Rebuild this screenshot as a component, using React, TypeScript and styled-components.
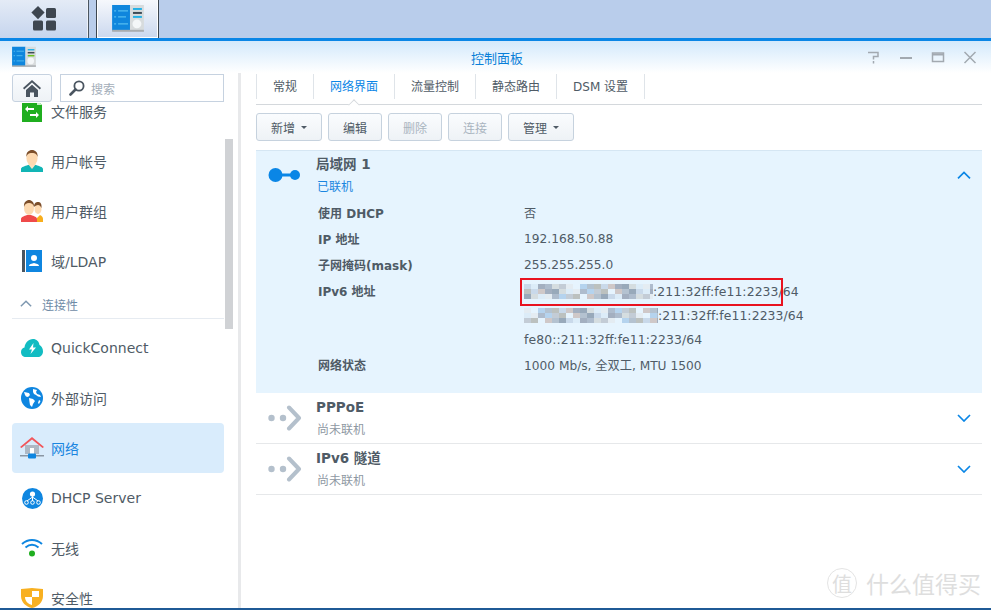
import { createGlobalStyle, styled } from 'styled-components';

const GlobalStyle = createGlobalStyle`
  html, body {
    margin: 0;
    width: 991px;
    height: 610px;
    overflow: hidden;
    background: #fff;
    font-family: "DejaVu Sans", "Noto Sans CJK SC", sans-serif;
    font-size: 12px;
    color: #4f5b66;
  }
`;

const MOSAIC_COLORS = ['#b4c2d0', '#c9d9ea', '#a3afc0', '#d5dde0', '#e4ecf2', '#b5d3ee', '#bcc1bf', '#cfc8c8', '#98a9ba', '#dcecf8', '#aebccd', '#c3ccd6', '#e6f4fe'];

const ControlPanelIcon = ({ size, small }: { size: number; small?: boolean }) => (
  <svg width={size} height={size * 0.9} viewBox="0 0 32 29">
    <rect x="0" y="1" width="18" height="26" fill="#0f86dd" />
    <rect x="18" y="1" width="14" height="26" fill="#d7dbdd" />
    <rect x="0" y="26" width="32" height="2" fill="#a9adb0" />
    <g stroke="#55bdf0" strokeWidth="1.2">
      <path d="M6 7h10M6 13h8M6 20h10M2 7h2M2 13h2M2 20h2" />
    </g>
    <path d="M21 5h9" stroke="#25b1e6" strokeWidth="2" />
    <path d="M21 9h9" stroke="#3d4a55" strokeWidth="2" />
    <path d="M21 13h9" stroke={small ? '#6cc21f' : '#25b1e6'} strokeWidth="2" />
    <circle cx="25" cy="20" r="4.5" fill="#f3f6f8" />
  </svg>
);

const HomeGridIcon = () => (
  <svg width="26" height="26" viewBox="0 0 26 26" fill="#3e4650">
    <path d="M7 0l6.6 6.6L7 13.2.4 6.6z" />
    <rect x="15" y="2" width="10" height="10" rx="1.5" />
    <rect x="2" y="14.5" width="10" height="10" rx="1.5" />
    <rect x="15" y="14.5" width="10" height="10" rx="1.5" />
  </svg>
);

const HomeIcon = () => (
  <svg width="18" height="17" viewBox="0 0 18 17" fill="#4a5560">
    <path d="M9 0L0 8l1.2 1.4L9 2.6l7.8 6.8L18 8z" />
    <path d="M3 10l6-5.2L15 10v7h-4v-4.5H7V17H3z" />
  </svg>
);

const SearchIcon = () => (
  <svg width="16" height="16" viewBox="0 0 16 16" fill="none" stroke="#4a5560">
    <circle cx="10" cy="6" r="4.6" strokeWidth="1.8" />
    <path d="M6.5 9.5L1.5 14.5" strokeWidth="2.6" strokeLinecap="round" />
  </svg>
);

const FileServiceIcon = () => (
  <svg width="20" height="22" viewBox="0 0 20 22">
    <path d="M0 0h15l5 5v17H0z" fill="#1fae1f" />
    <path d="M15 0l5 5h-5z" fill="#c8efc8" />
    <path d="M3 9l3-3v2h6v2H6v2zM17 15l-3-3v2H8v2h6v2z" fill="#fff" />
  </svg>
);

const UserIcon = () => (
  <svg width="22" height="22" viewBox="0 0 22 22">
    <path d="M0 22v-3c0-2 4-3 7-4h8c3 1 7 2 7 4v3z" fill="#12b5b5" />
    <path d="M7 14h8l-4 5z" fill="#fde0bd" />
    <ellipse cx="11" cy="8" rx="5.6" ry="7.4" fill="#fdd9b0" />
    <path d="M5.4 7C5 2 8 0 11 0s6 2 5.600 7c-1-3-2-4-5.600-4S6.400 4 5.400 7z" fill="#7d4f2b" />
  </svg>
);

const GroupIcon = () => (
  <svg width="22" height="22" viewBox="0 0 22 22">
    <ellipse cx="17" cy="9" rx="3.500" ry="5" fill="#fdd9b0" />
    <path d="M13 7c0-4 2-5 4-5s4 1 3.500 6c-1-2-2-3-3.500-3s-3 1-4 2z" fill="#7d4f2b" />
    <path d="M16 18l3-3c2 1 3 2 3 4v3h-6z" fill="#f8ae1c" />
    <path d="M0 22v-3c0-2 3-3 6-4h4c3 1 6 2 6 4v3z" fill="#ef4a4a" />
    <ellipse cx="8" cy="8" rx="5" ry="7" fill="#fdd9b0" />
    <path d="M3 7C2.600 2 5.500 0 8 0s5.400 2 5 7c-1-3-2-4-5-4S4 4 3 7z" fill="#7d4f2b" />
  </svg>
);

const LdapIcon = () => (
  <svg width="20" height="22" viewBox="0 0 20 22">
    <rect x="0" y="0" width="3" height="22" fill="#4a5560" />
    <rect x="4" y="0" width="16" height="22" fill="#0f86e0" />
    <circle cx="12" cy="8" r="3" fill="#fff" />
    <path d="M7 16c0-2 3-2.500 5-3 2 .5 5 1 5 3z" fill="#fff" />
  </svg>
);

const QuickConnectIcon = () => (
  <svg width="22" height="18" viewBox="0 0 22 18">
    <path d="M5 18C2 18 0 16 0 13c0-2.500 1.500-4 3.500-4.500C4 4 7.500 0 12 0c3.500 0 6 2.500 6.500 6C20.500 7 22 9.500 22 12.500 22 16 19.500 18 17 18z" fill="#12bcc2" />
    <path d="M12.500 4L8 10.500h3L9.500 15 15 8.500h-3z" fill="#fff" />
  </svg>
);

const GlobeIcon = () => (
  <svg width="22" height="22" viewBox="0 0 22 22">
    <circle cx="11" cy="11" r="11" fill="#0f86e0" />
    <path d="M3 5c2 0 3 1 5 1l1 2-2 2-2-.5-1-1.500zM8 11l4 1 2 2-2 3-1 3-2-2-.5-3zM12 2l4 1-1 2 1 2 3 1 1 2-3-.5-2-1.500-2-1-1-2zM18 13l1.500 1-1.500 3-1-1z" fill="#fff" />
  </svg>
);

const NetworkIcon = () => (
  <svg width="24" height="22" viewBox="0 0 24 22">
    <path d="M5 8h14v9H5z" fill="#aeb8c4" />
    <rect x="10" y="11" width="4" height="6" fill="#fff" />
    <path d="M0 10L12 0l12 10-1.500 1L12 2.500 1.500 11z" fill="#f2555a" />
    <rect x="0" y="18" width="24" height="1.500" fill="#8a96a3" />
    <rect x="8" y="16.500" width="8" height="5" rx="1" fill="#0f86e0" />
  </svg>
);

const DhcpIcon = () => (
  <svg width="21" height="21" viewBox="0 0 21 21">
    <circle cx="10.500" cy="10.500" r="10.500" fill="#0f86e0" />
    <g fill="none" stroke="#fff">
      <path d="M10.500 7v6M10.500 9L5 13M10.500 9l5.500 4" strokeWidth="1" />
      <circle cx="4.500" cy="14.500" r="1.800" />
      <circle cx="10.500" cy="14.500" r="1.800" />
      <circle cx="16.500" cy="14.500" r="1.800" />
    </g>
    <circle cx="10.500" cy="6" r="2.600" fill="#fff" />
  </svg>
);

const WifiIcon = () => (
  <svg width="22" height="18" viewBox="0 0 22 18" fill="none">
    <path d="M1 5c6-5.300 14-5.300 20 0" stroke="#0f86e0" strokeWidth="2" />
    <path d="M4.500 8.500c4-3.300 9-3.300 13 0" stroke="#0f86e0" strokeWidth="2" />
    <circle cx="11" cy="14.500" r="3" fill="#1fae1f" />
  </svg>
);

const ShieldIcon = () => (
  <svg width="22" height="20" viewBox="0 0 22 20">
    <path d="M0 1c4 0 8-1 11-1s7 1 11 1v7c0 6-5 11-11 12C5 19 0 14 0 8z" fill="#f8b021" />
    <path d="M11 3h7v6h-7zM4 9h7v8c-4-1-7-4-7-8z" fill="#fff" />
  </svg>
);

const ConnectedIcon = () => (
  <svg width="32" height="16" viewBox="0 0 32 16">
    <circle cx="7.500" cy="8" r="7" fill="#0a86e6" />
    <rect x="12" y="6.500" width="14" height="3" fill="#0a86e6" />
    <circle cx="27" cy="8" r="5" fill="#0a86e6" />
  </svg>
);

const DisconnectedIcon = () => (
  <svg width="34" height="26" viewBox="0 0 34 26">
    <circle cx="3.500" cy="13" r="3.200" fill="#b4c0cc" />
    <circle cx="15" cy="13" r="3.200" fill="#b4c0cc" />
    <path d="M21 2.500L31 13 21 23.500" fill="none" stroke="#b4c0cc" strokeWidth="4" strokeLinecap="round" strokeLinejoin="round" />
  </svg>
);

const Chevron = ({ up, color, size }: { up?: boolean; color: string; size: number }) => (
  <svg width={size} height={size * 0.6} viewBox="0 0 14 8.400" fill="none">
    <path d={up ? 'M1 7.400L7 1.400l6 6' : 'M1 1l6 6 6-6'} stroke={color} strokeWidth="1.700" />
  </svg>
);

const Mosaic = ({ width, seed }: { width: number; seed: number }) => {
  const cols = Math.ceil(width / 7);
  return (
    <svg width={width} height="15" viewBox={`0 0 ${width} 15`}>
      {Array.from({ length: cols * 3 }, (_, i) => {
        const col = i % cols;
        const row = Math.floor(i / cols);
        return (
          <rect
            key={i}
            x={col * 7}
            y={row * 5}
            width="7"
            height="5"
            fill={MOSAIC_COLORS[(col * 7 + row * row * 5 + seed + (col * col) % 4) % MOSAIC_COLORS.length]}
          />
        );
      })}
    </svg>
  );
};

const menuItems = [
  { label: '文件服务', icon: <FileServiceIcon /> },
  { label: '用户帐号', icon: <UserIcon /> },
  { label: '用户群组', icon: <GroupIcon /> },
  { label: '域/LDAP', icon: <LdapIcon /> },
  { section: '连接性' },
  { label: 'QuickConnect', icon: <QuickConnectIcon /> },
  { label: '外部访问', icon: <GlobeIcon /> },
  { label: '网络', icon: <NetworkIcon />, active: true },
  { label: 'DHCP Server', icon: <DhcpIcon /> },
  { label: '无线', icon: <WifiIcon /> },
  { label: '安全性', icon: <ShieldIcon /> },
];

const tabs = ['常规', '网络界面', '流量控制', '静态路由', 'DSM 设置'];

export default function App() {
  return (
    <>
      <GlobalStyle />
      <Taskbar>
        <HomeTab>
          <HomeGridIcon />
        </HomeTab>
        <ActiveTab>
          <ControlPanelIcon size={32} />
        </ActiveTab>
      </Taskbar>
      <Window>
        <TitleBar>
          <TitleIcon>
            <ControlPanelIcon size={24} small />
          </TitleIcon>
          <Title>控制面板</Title>
          <WindowTools>
            <svg width="14" height="13" viewBox="0 0 14 13" fill="none" stroke="#a2a9b0" strokeWidth="1.500">
              <path d="M1 1.500h10v4H6.500v3" />
              <path d="M6.500 10v2.500" />
            </svg>
            <svg width="14" height="13" viewBox="0 0 14 13" fill="#a2a9b0">
              <rect x="1" y="6" width="12" height="2" />
            </svg>
            <svg width="14" height="13" viewBox="0 0 14 13" fill="none" stroke="#a2a9b0">
              <rect x="1.500" y="2" width="11" height="8.500" strokeWidth="1.500" />
              <path d="M1 3.500h12" strokeWidth="2" />
            </svg>
            <svg width="14" height="13" viewBox="0 0 14 13" fill="none" stroke="#a2a9b0" strokeWidth="1.500">
              <path d="M1.500 1l11 11M12.500 1l-11 11" />
            </svg>
          </WindowTools>
        </TitleBar>
        <Body>
          <Sidebar>
            <SideTools>
              <HomeButton>
                <HomeIcon />
              </HomeButton>
              <SearchBox>
                <SearchIcon />
                <span>搜索</span>
              </SearchBox>
            </SideTools>
            <MenuScroll>
              <MenuList>
                {menuItems.map((item) =>
                  item.section ? (
                    <Section key={item.section}>
                      <Chevron up color="#7e98b0" size={12} />
                      <span>{item.section}</span>
                    </Section>
                  ) : (
                    <MenuItem key={item.label} $active={item.active}>
                      <MenuIcon>{item.icon}</MenuIcon>
                      <span>{item.label}</span>
                    </MenuItem>
                  ),
                )}
              </MenuList>
              <ScrollThumb />
            </MenuScroll>
          </Sidebar>
          <Main>
            <TabBar>
              {tabs.map((tab) => (
                <Tab key={tab} $active={tab === '网络界面'}>
                  {tab}
                </Tab>
              ))}
            </TabBar>
            <Toolbar>
              <Button>
                新增 <Caret />
              </Button>
              <Button>编辑</Button>
              <Button disabled>删除</Button>
              <Button disabled>连接</Button>
              <Button>
                管理 <Caret />
              </Button>
            </Toolbar>
            <Panel>
              <PanelHead>
                <StatusIcon>
                  <ConnectedIcon />
                </StatusIcon>
                <PanelTitles>
                  <PanelName>局域网 1</PanelName>
                  <PanelState $on>已联机</PanelState>
                </PanelTitles>
                <Chevron up color="#0a86e6" size={14} />
              </PanelHead>
              <Details>
                <DetailLabel>使用 DHCP</DetailLabel>
                <DetailValue>否</DetailValue>
                <DetailLabel>IP 地址</DetailLabel>
                <DetailValue>192.168.50.88</DetailValue>
                <DetailLabel>子网掩码(mask)</DetailLabel>
                <DetailValue>255.255.255.0</DetailValue>
                <DetailLabel>IPv6 地址</DetailLabel>
                <Ipv6Value>
                  <Mosaic width={129} seed={1} />
                  :211:32ff:fe11:2233/64
                  <RedBox />
                </Ipv6Value>
                <span />
                <Ipv6Value>
                  <Mosaic width={134} seed={4} />
                  :211:32ff:fe11:2233/64
                </Ipv6Value>
                <span />
                <Ipv6Value>fe80::211:32ff:fe11:2233/64</Ipv6Value>
                <DetailLabel>网络状态</DetailLabel>
                <DetailValue>1000 Mb/s, 全双工, MTU 1500</DetailValue>
              </Details>
            </Panel>
            <CollapsedRow>
              <StatusIcon>
                <DisconnectedIcon />
              </StatusIcon>
              <PanelTitles>
                <PanelName>PPPoE</PanelName>
                <PanelState>尚未联机</PanelState>
              </PanelTitles>
              <Chevron color="#0a86e6" size={14} />
            </CollapsedRow>
            <CollapsedRow>
              <StatusIcon>
                <DisconnectedIcon />
              </StatusIcon>
              <PanelTitles>
                <PanelName>IPv6 隧道</PanelName>
                <PanelState>尚未联机</PanelState>
              </PanelTitles>
              <Chevron color="#0a86e6" size={14} />
            </CollapsedRow>
          </Main>
        </Body>
        <Watermark>
          <WatermarkSeal>值</WatermarkSeal>
          什么值得买
        </Watermark>
      </Window>
    </>
  );
}

const Taskbar = styled.div`
  display: flex;
  height: 38px;
  background: #b9cdeb;
`;

const HomeTab = styled.div`
  width: 88px;
  display: flex;
  align-items: center;
  justify-content: center;
  padding-left: 1px;
  background: linear-gradient(#e4ebf6, #c6d5ee);
  border-right: 1px solid #eef2f9;
  box-sizing: border-box;
  box-shadow: 1px 0 0 #4a5560;
`;

const ActiveTab = styled.div`
  width: 61px;
  margin-left: 9px;
  display: flex;
  align-items: center;
  justify-content: center;
  box-sizing: border-box;
  background: linear-gradient(#f6f8fc, #ccd9ef);
  border: 1px solid #fff;
  border-top: 0;
  box-shadow: 1px 0 0 #3d4650, -1px 0 0 #3d4650;
`;

const Window = styled.div`
  position: relative;
  height: 572px;
  box-sizing: border-box;
  display: flex;
  flex-direction: column;
  border-top: 3px solid #0a86e6;
  border-bottom: 2px solid #1f5a96;
  overflow: hidden;
`;

const TitleBar = styled.div`
  height: 32px;
  flex: none;
  display: grid;
  grid-template-columns: 1fr auto 1fr;
  align-items: center;
  background: linear-gradient(#d3e9fb, #fff);
`;

const TitleIcon = styled.div`
  display: flex;
  padding-left: 12px;
`;

const Title = styled.div`
  font-size: 13px;
  color: #0a7fd8;
  padding-left: 3px;
`;

const WindowTools = styled.div`
  display: flex;
  justify-content: flex-end;
  gap: 18px;
  padding-right: 14px;
`;

const Body = styled.div`
  flex: 1;
  display: flex;
  min-height: 0;
`;

const Sidebar = styled.div`
  width: 241px;
  flex: none;
  display: flex;
  flex-direction: column;
  box-sizing: border-box;
  border-right: 3px solid #e8e9eb;
`;

const SideTools = styled.div`
  display: flex;
  gap: 8px;
  padding: 1px 0 0 12px;
  height: 29px;
  flex: none;
  position: relative;
  z-index: 1;
`;

const HomeButton = styled.div`
  width: 40px;
  height: 28px;
  box-sizing: border-box;
  display: flex;
  align-items: center;
  justify-content: center;
  border: 1px solid #c6d2e0;
  border-radius: 3px;
  background: linear-gradient(#fafcfe, #eef2f6);
`;

const SearchBox = styled.div`
  width: 164px;
  height: 28px;
  box-sizing: border-box;
  display: flex;
  align-items: center;
  gap: 6px;
  padding-left: 8px;
  border: 1px solid #c6d2e0;
  background: #fff;
  color: #a3aeb9;
`;

const MenuScroll = styled.div`
  position: relative;
  flex: 1;
  min-height: 0;
  overflow: hidden;
`;

const MenuList = styled.div`
  margin-top: -17px;
  padding: 0 14px 0 12px;
`;

const MenuItem = styled.div<{ $active?: boolean }>`
  height: 50px;
  display: flex;
  align-items: center;
  gap: 7px;
  padding-left: 8px;
  border-radius: 4px;
  font-size: 14px;
  background: ${(p) => (p.$active ? '#d9ecfc' : 'transparent')};
  color: ${(p) => (p.$active ? '#1a86e0' : '#4f5b66')};
`;

const MenuIcon = styled.div`
  width: 24px;
  flex: none;
  display: flex;
  justify-content: center;
`;

const Section = styled.div`
  height: 27px;
  margin: 6px 0 4px;
  display: flex;
  align-items: center;
  gap: 10px;
  padding: 0 0 2px 8px;
  box-sizing: border-box;
  border-bottom: 1px solid #e6ebf1;
  color: #6f8ba6;
  font-size: 12px;
`;

const ScrollThumb = styled.div`
  position: absolute;
  top: 36px;
  left: 225px;
  width: 8px;
  height: 190px;
  background: #d0d2d5;
`;

const Main = styled.div`
  flex: 1;
  min-width: 0;
  padding: 0 9px 0 15px;
`;

const TabBar = styled.div`
  height: 32px;
  box-sizing: border-box;
  display: flex;
  border-bottom: 1px solid #d4d8dc;
  padding-top: 1px;
`;

const Tab = styled.div<{ $active?: boolean }>`
  position: relative;
  height: 23px;
  padding: 0 16.5px 7px;
  display: flex;
  align-items: center;
  color: ${(p) => (p.$active ? '#0a86e6' : '#4f5b66')};
  background: linear-gradient(#dfe4e9, #dfe4e9) right top / 1px 25px no-repeat;
  &:first-child {
    padding-left: 17px;
    background:
      linear-gradient(#dfe4e9, #dfe4e9) right top / 1px 25px no-repeat,
      linear-gradient(#dfe4e9, #dfe4e9) left top / 1px 25px no-repeat;
  }
  ${(p) =>
    p.$active &&
    `&::after {
      content: '';
      position: absolute;
      left: 50%;
      bottom: -6px;
      width: 9px;
      height: 9px;
      margin-left: -5px;
      background: #fff;
      border-top: 1px solid #d4d8dc;
      border-left: 1px solid #d4d8dc;
      transform: rotate(45deg) scale(0.8);
    }`}
`;

const Toolbar = styled.div`
  display: flex;
  gap: 6px;
  padding: 8px 0 9px;
`;

const Button = styled.div<{ disabled?: boolean }>`
  height: 28px;
  min-width: 54px;
  box-sizing: border-box;
  padding: 0 14px;
  display: flex;
  align-items: center;
  justify-content: center;
  gap: 6px;
  border: 1px solid #c6d2de;
  border-radius: 3px;
  background: linear-gradient(#fafcfe, #eef2f6);
  color: ${(p) => (p.disabled ? '#a9b4bf' : '#4f5b66')};
`;

const Caret = styled.span`
  width: 0;
  height: 0;
  border-left: 3px solid transparent;
  border-right: 3px solid transparent;
  border-top: 3px solid #4f5b66;
`;

const Panel = styled.div`
  height: 243px;
  box-sizing: border-box;
  background: #e6f4fe;
  border-top: 1px solid #d5e6f3;
`;

const PanelHead = styled.div`
  height: 48px;
  display: flex;
  align-items: center;
  padding-right: 11px;
`;

const StatusIcon = styled.div`
  width: 60px;
  flex: none;
  display: flex;
  padding-left: 12px;
  box-sizing: border-box;
`;

const PanelTitles = styled.div`
  flex: 1;
  display: flex;
  flex-direction: column;
  gap: 6px;
`;

const PanelName = styled.div`
  font-size: 13.5px;
  line-height: 18px;
  font-weight: bold;
  color: #4f5b66;
`;

const PanelState = styled.div<{ $on?: boolean }>`
  line-height: 17px;
  padding-left: 1px;
  color: ${(p) => (p.$on ? '#1a86e0' : '#8e98a3')};
`;

const Details = styled.div`
  display: grid;
  grid-template-columns: 206px 1fr;
  grid-template-rows: 26px 26px 26px 26px 22px 26px 26px;
  padding: 1px 0 0 62px;
  align-items: center;
`;

const DetailLabel = styled.div`
  font-weight: bold;
  color: #4f5b66;
  padding-bottom: 2px;
`;

const DetailValue = styled.div`
  position: relative;
  display: flex;
  align-items: center;
  font-size: 12.2px;
  color: #4f5b66;
`;

const Ipv6Value = styled(DetailValue)`
  font-size: 12.4px;
  letter-spacing: 0.1px;
`;

const RedBox = styled.div`
  position: absolute;
  left: -4px;
  top: -6px;
  width: 263px;
  height: 28px;
  box-sizing: border-box;
  border: 2px solid #e8121f;
`;

const CollapsedRow = styled.div`
  height: 51px;
  box-sizing: border-box;
  display: flex;
  align-items: center;
  padding-right: 11px;
  border-bottom: 1px solid #e6e8ea;
`;

const Watermark = styled.div`
  position: absolute;
  right: 10px;
  bottom: 8px;
  display: flex;
  align-items: center;
  gap: 9px;
  font-size: 23px;
  color: #dedede;
`;

const WatermarkSeal = styled.span`
  width: 28px;
  height: 28px;
  display: flex;
  align-items: center;
  justify-content: center;
  border: 1px solid #e4e4e4;
  border-radius: 50%;
  font-size: 20px;
`;
